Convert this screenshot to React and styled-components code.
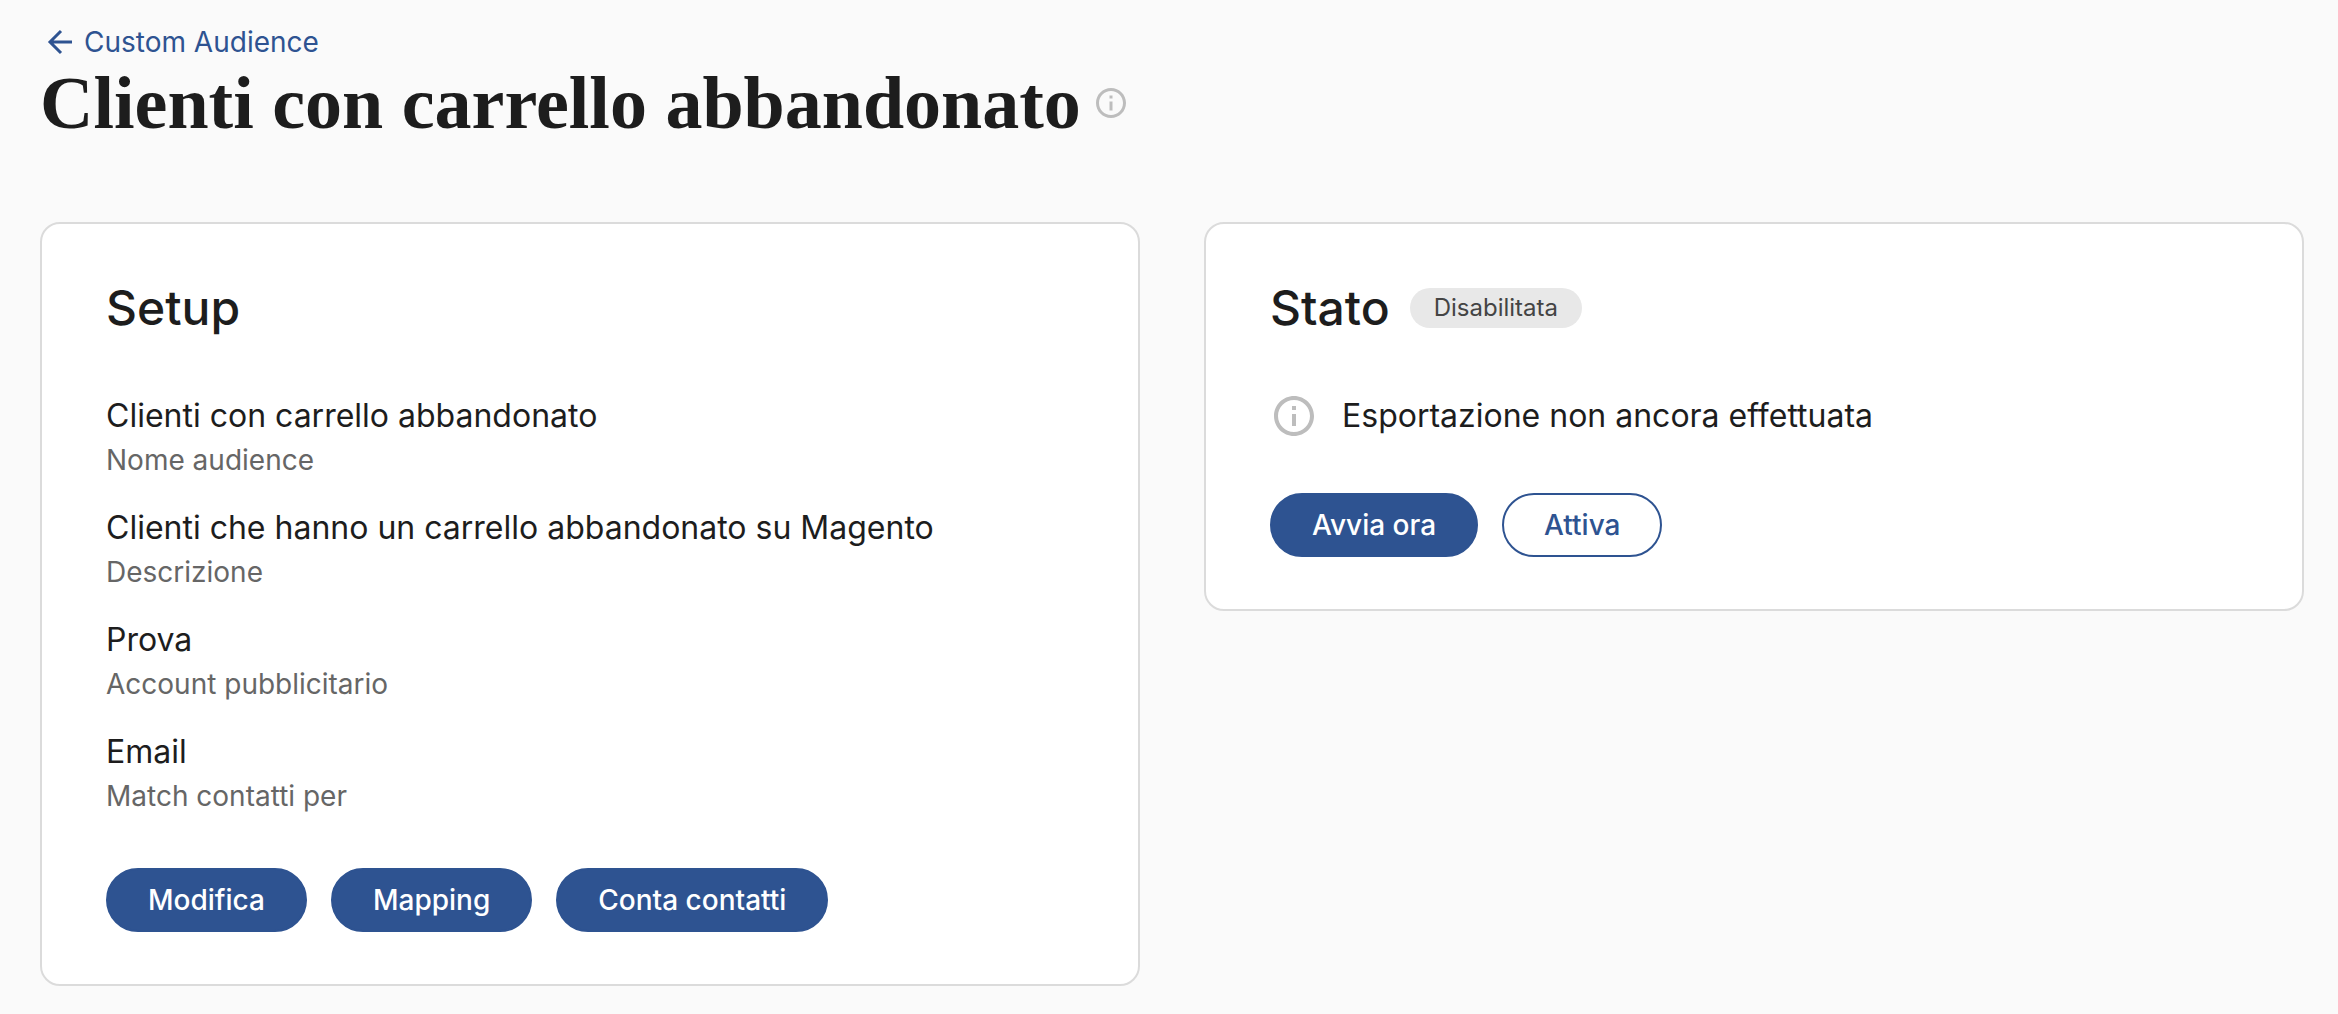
import styled, { createGlobalStyle } from "styled-components";

const GlobalStyle = createGlobalStyle`
  * {
    box-sizing: border-box;
  }

  body {
    margin: 0;
    background-color: #fafafa;
    color: #1d1d1d;
    font-family: Inter, "Liberation Sans", sans-serif;
    font-size: 32px;
    line-height: 40px;
  }
`;

const Page = styled.main`
  padding: 22px 34px 28px 40px;
`;

const BackLink = styled.a`
  display: flex;
  align-items: center;
  gap: 8px;
  width: fit-content;
  padding-left: 4px;
  color: #2e5391;
  font-size: 28px;
  text-decoration: none;
`;

const TitleRow = styled.div`
  display: flex;
  align-items: center;
  gap: 12px;
  margin-bottom: 78px;
`;

const Title = styled.h1`
  margin: 0;
  font-family: "Liberation Serif", serif;
  font-size: 74px;
  font-weight: 700;
  line-height: 82px;
`;

const Columns = styled.div`
  display: grid;
  grid-template-columns: 1fr 1fr;
  gap: 64px;
  align-items: start;
`;

const Card = styled.section`
  padding: 64px 64px 52px;
  background-color: white;
  border: 2px solid #dbdbdb;
  border-radius: 20px;
`;

const CardHeader = styled.header`
  display: flex;
  align-items: center;
  gap: 20px;
  margin-bottom: 68px;
`;

const CardTitle = styled.h2`
  margin: 0;
  font-size: 48px;
  font-weight: 500;
  line-height: 40px;
`;

const Badge = styled.span`
  padding: 0 24px;
  border-radius: 20px;
  background-color: #e8e8e8;
  color: #444;
  font-size: 24px;
`;

const Details = styled.dl`
  display: flex;
  flex-direction: column;
  gap: 28px;
  margin: 0 0 52px;
`;

/* The value is shown above its label */
const Detail = styled.div`
  display: flex;
  flex-direction: column-reverse;
  gap: 4px;
`;

const Label = styled.dt`
  color: #666;
  font-size: 28px;
`;

const Value = styled.dd`
  margin: 0;
`;

const Message = styled.div`
  display: flex;
  align-items: center;
  gap: 24px;
  height: 40px;
  margin-bottom: 57px;
`;

const Actions = styled.div`
  display: flex;
  flex-wrap: wrap;
  gap: 24px;
`;

const Button = styled.button`
  height: 64px;
  padding: 0 40px;
  border: 2px solid #2e5391;
  border-radius: 32px;
  background-color: ${({ $outlined }) => ($outlined ? "white" : "#2e5391")};
  color: ${({ $outlined }) => ($outlined ? "#2e5391" : "white")};
  font-family: inherit;
  font-size: 28px;
  font-weight: 500;
  cursor: pointer;
`;

const Icon = styled.svg`
  flex: none;
  width: ${({ $size }) => $size}px;
  height: ${({ $size }) => $size}px;
  fill: #bdbdbd;
`;

const ArrowIcon = styled.svg`
  flex: none;
  width: 32px;
  height: 32px;
  fill: none;
  stroke: currentColor;
  stroke-width: 3;
`;

const details = [
  { label: "Nome audience", value: "Clienti con carrello abbandonato" },
  {
    label: "Descrizione",
    value: "Clienti che hanno un carrello abbandonato su Magento",
  },
  { label: "Account pubblicitario", value: "Prova" },
  { label: "Match contatti per", value: "Email" },
];

function InfoIcon({ size }) {
  return (
    <Icon $size={size} viewBox="0 0 24 24" aria-hidden="true">
      <path d="M11 7h2v2h-2zm0 4h2v6h-2zm1-9C6.48 2 2 6.48 2 12s4.48 10 10 10 10-4.48 10-10S17.52 2 12 2zm0 18c-4.41 0-8-3.59-8-8s3.59-8 8-8 8 3.59 8 8-3.59 8-8 8z" />
    </Icon>
  );
}

export default function App() {
  return (
    <>
      <GlobalStyle />
      <Page>
        <BackLink href="#">
          <ArrowIcon viewBox="0 0 32 32" aria-hidden="true">
            <path d="M28 16H7M17 5L6 16l11 11" />
          </ArrowIcon>
          Custom Audience
        </BackLink>
        <TitleRow>
          <Title>Clienti con carrello abbandonato</Title>
          <InfoIcon size={36} />
        </TitleRow>

        <Columns>
          <Card>
            <CardHeader>
              <CardTitle>Setup</CardTitle>
            </CardHeader>
            <Details>
              {details.map(({ label, value }) => (
                <Detail key={label}>
                  <Label>{label}</Label>
                  <Value>{value}</Value>
                </Detail>
              ))}
            </Details>
            <Actions>
              <Button type="button">Modifica</Button>
              <Button type="button">Mapping</Button>
              <Button type="button">Conta contatti</Button>
            </Actions>
          </Card>

          <Card>
            <CardHeader>
              <CardTitle>Stato</CardTitle>
              <Badge>Disabilitata</Badge>
            </CardHeader>
            <Message>
              <InfoIcon size={48} />
              Esportazione non ancora effettuata
            </Message>
            <Actions>
              <Button type="button">Avvia ora</Button>
              <Button type="button" $outlined>
                Attiva
              </Button>
            </Actions>
          </Card>
        </Columns>
      </Page>
    </>
  );
}
